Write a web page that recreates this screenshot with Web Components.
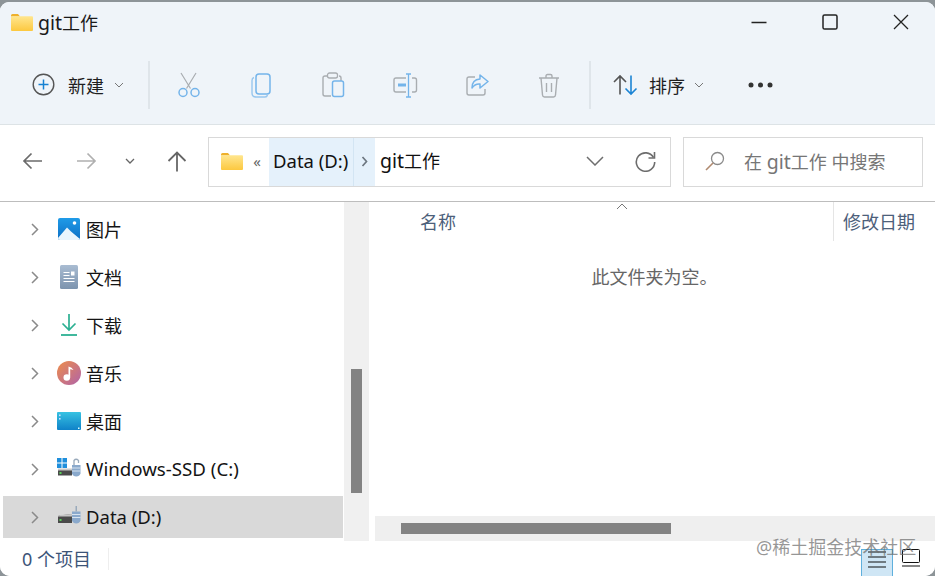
<!DOCTYPE html>
<html lang="zh"><head><meta charset="utf-8"><title>git工作</title>
<style>
html,body{margin:0;padding:0;width:935px;height:576px;overflow:hidden;background:#3c4140}
body{font:18px "Noto Sans","Noto Sans CJK SC",sans-serif;color:#1b1b1b}
</style></head><body>
<x-window>
  <x-titlebar><span style="font-size:19.5px">git</span>工作</x-titlebar>
  <x-commandbar></x-commandbar>
  <x-addressbar></x-addressbar>
  <x-main>
    <x-nav-item slot="nav" icon="pic">图片</x-nav-item>
    <x-nav-item slot="nav" icon="doc">文档</x-nav-item>
    <x-nav-item slot="nav" icon="down">下载</x-nav-item>
    <x-nav-item slot="nav" icon="music">音乐</x-nav-item>
    <x-nav-item slot="nav" icon="desk">桌面</x-nav-item>
    <x-nav-item slot="nav" icon="cdrive" latin><span style="font-size:18.7px">Windows-SSD (C:)</span></x-nav-item>
    <x-nav-item slot="nav" icon="ddrive" latin selected><span style="font-size:18.5px">Data (D:)</span></x-nav-item>
  </x-main>
  <x-statusbar></x-statusbar>
</x-window>
<script>
const folder=(w,h)=>`<svg width="${w}" height="${h}" viewBox="0 0 22 17"><defs><linearGradient id="fg" x1="0" y1="0" x2="0" y2="1"><stop offset="0" stop-color="#ffe68f"/><stop offset="1" stop-color="#fcc83f"/></linearGradient></defs><path d="M0 1.500Q0 0 1.500 0H7l2 2.500H0z" fill="#eeb02c"/><rect y="2.200" width="22" height="14.800" rx="1" fill="url(#fg)"/></svg>`;
const def=(name,html,init)=>customElements.define(name,class extends HTMLElement{
  constructor(){super();this.attachShadow({mode:"open"}).innerHTML=html;}
  connectedCallback(){init&&init(this);}
});
const FONT=`"Noto Sans","Noto Sans CJK SC",sans-serif`;

def("x-window",`<style>
:host{display:block;width:935px;height:576px;position:relative;overflow:hidden;background:#8d9498;padding-top:2px;box-sizing:border-box}
.w{height:574px;background:#fff;border-radius:9px 9px 10px 10px;overflow:hidden;display:flex;flex-direction:column;position:relative}
.wm{position:absolute;left:756px;top:535px;font:18px ${FONT};color:rgba(110,110,110,.72);white-space:nowrap;line-height:20px;z-index:3}
</style><div class="w"><slot></slot><div class="wm">@稀土掘金技术社区</div></div>`);

def("x-titlebar",`<style>
:host{display:flex;align-items:center;height:43px;background:#eff4f9;flex:none;box-sizing:border-box;padding-bottom:3px}
.f{margin-left:11px;display:flex}
.t{margin-left:5px;font:18px ${FONT};color:#1a1a1a;flex:1}
.c{display:flex}
.b{width:71px;height:40px;display:flex;align-items:center;justify-content:center}
</style><span class="f">${folder(22,17)}</span><span class="t"><slot></slot></span>
<div class="c">
<div class="b"><svg width="16" height="16" viewBox="0 0 16 16"><path d="M0.500 8.500h15" stroke="#222" stroke-width="1.300"/></svg></div>
<div class="b"><svg width="16" height="16" viewBox="0 0 16 16"><rect x="1" y="1" width="14" height="14" rx="1.600" fill="none" stroke="#222" stroke-width="1.500"/></svg></div>
<div class="b" style="margin-right:-1px"><svg width="16" height="16" viewBox="0 0 16 16"><path d="M1 1l14 14M15 1L1 15" stroke="#222" stroke-width="1.300"/></svg></div>
</div>`);

const chev=`<svg width="10" height="6" viewBox="0 0 10 6"><path d="M1 1l4 4 4-4" fill="none" stroke="#777" stroke-width="1"/></svg>`;
const B="#74b4ea",G="#a9adb1";
const ic={
cut:`<svg width="24" height="26" viewBox="0 0 24 26" fill="none"><path d="M4 1l9.500 15.500M19 1L9.500 16.500" stroke="${G}" stroke-width="1.200"/><circle cx="6" cy="20.500" r="4" stroke="${B}" stroke-width="1.500"/><circle cx="18" cy="20.500" r="4" stroke="${B}" stroke-width="1.500"/></svg>`,
copy:`<svg width="20" height="25" viewBox="0 0 20 25" fill="none"><path d="M3 4.500Q1 5 1 7.500V20q0 4 4 4h9q2 0 2.500-2" stroke="${B}" stroke-opacity=".7" stroke-width="1.400"/><rect x="5" y="1" width="14" height="20" rx="3" stroke="${B}" stroke-width="1.500"/></svg>`,
paste:`<svg width="23" height="26" viewBox="0 0 23 26" fill="none"><path d="M5 4H3Q1 4 1 6v16q0 2 2 2h6M17 4q2 0 2 2v3" stroke="${G}" stroke-width="1.400"/><rect x="5.500" y="1" width="10" height="5" rx="2" stroke="${G}" stroke-width="1.300"/><rect x="10.500" y="9" width="11" height="15.500" rx="2" stroke="${B}" stroke-width="1.500"/></svg>`,
rename:`<svg width="25" height="25" viewBox="0 0 25 25" fill="none"><path d="M13 5H3Q1 5 1 7v10q0 2 2 2h10M19 5h2.500q2 0 2 2v10q0 2-2 2H19" stroke="${G}" stroke-width="1.400"/><path d="M5 12h8" stroke="${B}" stroke-width="3"/><path d="M13 1h5M15.500 1v23M13 24h5" stroke="${B}" stroke-width="1.300"/></svg>`,
share:`<svg width="23" height="24" viewBox="0 0 23 24" fill="none"><path d="M9 4H3Q1 4 1 6v14q0 2 2 2h14q2 0 2-2v-4" stroke="${G}" stroke-width="1.400"/><path d="M14 2l8 6.500-8 6.500v-4q-5-.5-8 4 0-8.500 8-9z" stroke="${B}" stroke-width="1.500" stroke-linejoin="round"/></svg>`,
trash:`<svg width="22" height="25" viewBox="0 0 22 25" fill="none" stroke="${G}" stroke-width="1.400"><path d="M1 5h20M8 4.500V3q0-1.500 1.500-1.500h3Q14 1.500 14 3v1.500M3 5l1.500 17q.2 2 2 2h9q1.800 0 2-2L19 5"/><path d="M8.500 10v9M13.500 10v9"/></svg>`,
sort:`<svg width="26" height="22" viewBox="0 0 26 22" fill="none" stroke-width="1.600"><path d="M7 20.500V2M1 8l6-6 6 6" stroke="#555"/><path d="M18 1.500V20M12.500 14.500l5.500 5.500 5.500-5.500" stroke="#1b84d4"/></svg>`
};
def("x-commandbar",`<style>
:host{display:flex;align-items:center;height:79px;background:#eff4f9;border-bottom:1px solid #dde3e6;flex:none;font:18px ${FONT};color:#1f1f1f;box-sizing:content-box}
.new{display:flex;align-items:center;margin-left:32px;width:116px}
.new span{margin:0 10px 0 13px}
.sep{width:2px;height:48px;background:#dfe5ea;flex:none}
.i{width:72px;display:flex;justify-content:center;align-items:center;flex:none;height:48px;margin-top:1px}
.g{display:flex;margin-left:3px;width:436px;flex:none}
.sort{display:flex;align-items:center;margin-left:22px}
.sort span{margin:0 9px 0 10px}
.dots{margin-left:44px;display:flex}
</style>
<div class="new"><svg width="23" height="23" viewBox="0 0 23 23" fill="none"><circle cx="11.500" cy="11.500" r="10.300" stroke="#555" stroke-width="1.400"/><path d="M11.500 6.500v10M6.500 11.500h10" stroke="#1681d2" stroke-width="1.500"/></svg><span>新建</span>${chev}</div>
<div class="sep"></div>
<div class="g"><div class="i">${ic.cut}</div><div class="i">${ic.copy}</div><div class="i">${ic.paste}</div><div class="i">${ic.rename}</div><div class="i">${ic.share}</div><div class="i">${ic.trash}</div></div>
<div class="sep"></div>
<div class="sort">${ic.sort}<span>排序</span>${chev}</div>
<div class="dots"><svg width="25" height="6" viewBox="0 0 25 6" fill="#333"><circle cx="3" cy="3" r="2.500"/><circle cx="12.500" cy="3" r="2.500"/><circle cx="22" cy="3" r="2.500"/></svg></div>`);

def("x-addressbar",`<style>
:host{display:flex;align-items:center;height:77px;background:#fff;border-bottom:1px solid #bdbdbd;flex:none;font:18px ${FONT};box-sizing:border-box;padding:0 0 2px 22px}
.nav{display:flex;align-items:center;width:186px;flex:none;padding-bottom:2px;box-sizing:border-box}
.n{display:flex}
.box{height:50px;box-sizing:border-box;border:1px solid #d9d9d9;display:flex;align-items:center;flex:none}
.addr{width:463px;margin-right:12px}
.addr .fo{margin:0 0 2px 12px;display:flex}
.lq{width:26px;text-align:center;color:#666;font-size:15px;flex:none;box-sizing:border-box;padding:0 0 3px 2px}
.crumb{height:48px;background:#e5f1fb;display:flex;align-items:center;box-sizing:border-box}
.c1{width:85px;padding:0 0 3px 4px;border-right:1px solid #d3e5f3;color:#111;white-space:nowrap;font-size:18.500px}
.c2{width:21px;justify-content:center;padding-bottom:1px}
.cur{margin:0 0 3px 5px;flex:1;color:#111}
.lat{font-size:19.500px}
.search{width:240px;color:#767676;padding-bottom:2px}
.search svg{margin:0 19px 0 21px;flex:none}
.dd{margin:0 31px 2px 0;display:flex}.re{margin:0 14px 1px 0;display:flex}
</style>
<div class="nav">
<span class="n"><svg width="21" height="18" viewBox="0 0 21 18" fill="none"><path d="M20 9H2M9.500 1.500L2 9l7.500 7.500" stroke="#6b6b6b" stroke-width="1.700"/></svg></span>
<span class="n" style="margin-left:33px"><svg width="21" height="18" viewBox="0 0 21 18" fill="none"><path d="M1 9h18M11.500 1.500L19 9l-7.500 7.500" stroke="#b0b0b0" stroke-width="1.700"/></svg></span>
<span class="n" style="margin-left:28px"><svg width="10" height="6" viewBox="0 0 10 6"><path d="M1 1l4 4 4-4" fill="none" stroke="#666" stroke-width="1.300"/></svg></span>
<span class="n" style="margin-left:32px"><svg width="20" height="21" viewBox="0 0 20 21" fill="none"><path d="M10 20.500V2M1.500 10L10 1.500 18.500 10" stroke="#666" stroke-width="1.800"/></svg></span>
</div>
<div class="box addr"><span class="fo">${folder(22,17)}</span><span class="lq">«</span>
<div class="crumb c1">Data (D:)</div>
<div class="crumb c2"><svg width="7" height="11" viewBox="0 0 7 11"><path d="M1.500 1l4 4.500-4 4.500" fill="none" stroke="#6d7780" stroke-width="1.700"/></svg></div>
<span class="cur"><span class="lat">git</span>工作</span>
<span class="dd"><svg width="18" height="10" viewBox="0 0 18 10"><path d="M1 1l8 8 8-8" fill="none" stroke="#6e6e6e" stroke-width="1.500"/></svg></span>
<span class="re"><svg width="21" height="21" viewBox="0 0 21 21" fill="none"><path d="M18.500 6.500A9.200 9.200 0 1 0 19.700 11" stroke="#6d6d6d" stroke-width="1.600"/><path d="M19.500 1v6h-6" stroke="#6d6d6d" stroke-width="1.600"/></svg></span>
</div>
<div class="box search"><svg width="20" height="20" viewBox="0 0 20 20" fill="none"><circle cx="12.500" cy="7.500" r="6" stroke="#8a8a8a" stroke-width="1.300"/><path d="M8 12l-7 7" stroke="#b08a70" stroke-width="1.600"/></svg><span>在 <span class="lat">git</span>工作 中搜索</span></div>`);

def("x-main",`<style>
:host{display:flex;height:339px;flex:none;font:18px ${FONT};background:#fff}
.nav{width:340px;margin-left:3px;padding-top:6px;display:flex;flex-direction:column;gap:6px;flex:none;box-sizing:border-box}
.vs{width:25px;margin-left:1px;background:#f0f0f0;flex:none;box-sizing:border-box;padding:167px 7px 0 7px}
.vs i{display:block;height:124px;background:#838383}
.list{margin-left:6px;flex:1;display:flex;flex-direction:column;min-width:0}
.head{height:39px;display:flex;position:relative;color:#4c607a;flex:none}
.name{margin-left:45px;width:413px;line-height:40px;height:39px}
.date{border-left:1px solid #e5e5e5;padding-left:9px;line-height:40px;white-space:nowrap;width:92px;overflow:hidden}
.caret{position:absolute;left:241px;top:1px}
.empty{flex:1;text-align:center;color:#666;padding-top:22px;line-height:28px;margin-left:-1px}
.hs{height:25px;background:#efefef;box-sizing:border-box;padding:7px 0 0 26px;flex:none}
.hs i{display:block;width:270px;height:11px;background:#838383}
</style>
<div class="nav"><slot name="nav"></slot></div>
<div class="vs"><i></i></div>
<div class="list">
<div class="head"><div class="name">名称</div><div class="date">修改日期</div>
<svg class="caret" width="12" height="7" viewBox="0 0 12 7"><path d="M1 6l5-5 5 5" fill="none" stroke="#777" stroke-width="1"/></svg></div>
<div class="empty">此文件夹为空。</div>
<div class="hs"><i></i></div>
</div>`);

const nav={
pic:`<svg width="22" height="22" viewBox="0 0 22 22"><defs><linearGradient id="a" x1="0" y1="0" x2="0" y2="1"><stop offset="0" stop-color="#1f9be8"/><stop offset="1" stop-color="#0d6fc4"/></linearGradient></defs><rect width="22" height="22" rx="2" fill="url(#a)"/><circle cx="16.500" cy="5" r="1.800" fill="#fff"/><path d="M0 20L9 9.500l4 4 9 7.500q-.5 1-2 1H2q-2 0-2-2z" fill="#e9f5fd"/></svg>`,
doc:`<svg width="18" height="24" viewBox="0 0 18 24"><defs><linearGradient id="b" x1="0" y1="0" x2="0" y2="1"><stop offset="0" stop-color="#a9bcd2"/><stop offset="1" stop-color="#7c93ae"/></linearGradient></defs><rect width="18" height="24" rx="1.500" fill="url(#b)"/><path d="M3.500 7.500h6M3.500 10.500h6M3.500 13.500h11M3.500 16.500h11" stroke="#fff" stroke-width="1"/><rect x="11" y="6.500" width="3.500" height="4" fill="#fff"/></svg>`,
down:`<svg width="16" height="22" viewBox="0 0 16 22" fill="none" stroke="#2cb092" stroke-width="1.700"><path d="M8 0v15.500M1.500 9.500L8 16l6.500-6.500"/><path d="M0 21h16" stroke-width="1.800"/></svg>`,
music:`<svg width="24" height="24" viewBox="0 0 24 24"><defs><linearGradient id="m" x1="0" y1="0" x2="1" y2="1"><stop offset="0" stop-color="#ee8d4a"/><stop offset="1" stop-color="#b063a9"/></linearGradient></defs><circle cx="12" cy="12" r="12" fill="url(#m)"/><circle cx="9.800" cy="16.500" r="3.300" fill="#fff"/><path d="M11.500 16.500V5.500q3.500.5 5 3.500-2.500-1-3.300-.8V16.500z" fill="#fff"/></svg>`,
desk:`<svg width="24" height="18" viewBox="0 0 24 18"><defs><linearGradient id="d" x1="0" y1="0" x2="0" y2="1"><stop offset="0" stop-color="#37c2e2"/><stop offset="1" stop-color="#0f82c8"/></linearGradient></defs><rect width="24" height="18" rx="1" fill="url(#d)"/><rect x="2" y="2.500" width="1.600" height="1.600" fill="#cdf"/><rect x="2" y="6" width="1.600" height="1.600" fill="#cdf"/><rect x="21" y="15.500" width="1.500" height="1.500" fill="#dff"/></svg>`,
cdrive:`<svg width="24" height="19" viewBox="0 0 24 19"><g fill="#1f8fdc"><rect width="4.500" height="4.500"/><rect x="5.500" width="4.500" height="4.500"/><rect y="5.500" width="4.500" height="4.500"/><rect x="5.500" y="5.500" width="4.500" height="4.500"/></g><path d="M1 11.500h14v6H1z" fill="#4a4a4a"/><path d="M1 10.500h14v2H1z" fill="#c9c9c9"/><rect x="2.500" y="14" width="2" height="2" fill="#58d058"/><path d="M15 7h8.500v8.500q-1 3-4.250 3T15 15.500z" fill="#8aa9cc"/><path d="M15 10h8.500M15 13h8.500" stroke="#d6e3f0"/><path d="M17 7V2.500q2-2.500 4.500 0V5" fill="none" stroke="#9ab" stroke-width="1.300"/></svg>`,
ddrive:`<svg width="24" height="19" viewBox="0 0 24 19"><path d="M1 11q0-1 1-1.500L15 8v9H1z" fill="#4a4a4a"/><path d="M1 11q0-1.500 2-2l12-1v2.500H1z" fill="#c6c6c6"/><rect x="2.500" y="13" width="2" height="2" fill="#58d058"/><path d="M15 5.500h8.500v9q-1 3-4.250 3T15 14.500z" fill="#8aa9cc"/><path d="M15 8.500h8.500M15 11.500h8.500" stroke="#d6e3f0"/><path d="M19.250 0v5.500" stroke="#9ab" stroke-width="1.500"/></svg>`
};
def("x-nav-item",`<style>
:host{display:flex;align-items:center;height:42px;flex:none;font:18px ${FONT};color:#141414;white-space:nowrap}
:host([selected]){background:#d9d9d9}
.ch{margin-left:28px;display:flex;width:8px}
.ic{width:24px;margin:0 0 0 18px;display:flex;justify-content:center;align-items:center}
.l{margin-left:5px}
:host([latin]) .l{padding-bottom:2px}
:host([latin]) .ic{padding-bottom:3px}
</style><span class="ch"><svg width="8" height="13" viewBox="0 0 8 13"><path d="M1 1l5.500 5.500L1 12" fill="none" stroke="#8a8a8a" stroke-width="1.500"/></svg></span><span class="ic"></span><span class="l"><slot></slot></span>`,
el=>{el.shadowRoot.querySelector(".ic").innerHTML=nav[el.getAttribute("icon")]||"";});

def("x-statusbar",`<style>
:host{display:flex;align-items:center;flex:1;background:#fff;font:18px ${FONT};color:#3c5478;position:relative}
.t{margin-left:22px;width:86px;line-height:34px;white-space:nowrap}
.s{width:1px;height:22px;background:#eee}
.v{position:absolute;left:861px;top:8px;width:32px;height:27px;box-sizing:border-box;background:#cfe6f5;border:1px solid #5fb0dd;border-bottom:0;display:flex;justify-content:center;align-items:flex-start}
.g{position:absolute;left:902px;top:8px}
</style><span class="t">0 个项目</span><span class="s"></span>
<div class="v"><svg width="20" height="18" viewBox="0 0 20 18"><path d="M1 2h18M1 7h18M1 12h18M1 17h18" stroke="#111" stroke-width="1.200"/></svg></div>
<svg class="g" width="18" height="18" viewBox="0 0 18 18" fill="none"><rect x=".5" y=".5" width="17" height="13" rx="1" stroke="#111"/><path d="M0 17h18" stroke="#111" stroke-width="1.200"/></svg>`);
</script>
</body></html>
